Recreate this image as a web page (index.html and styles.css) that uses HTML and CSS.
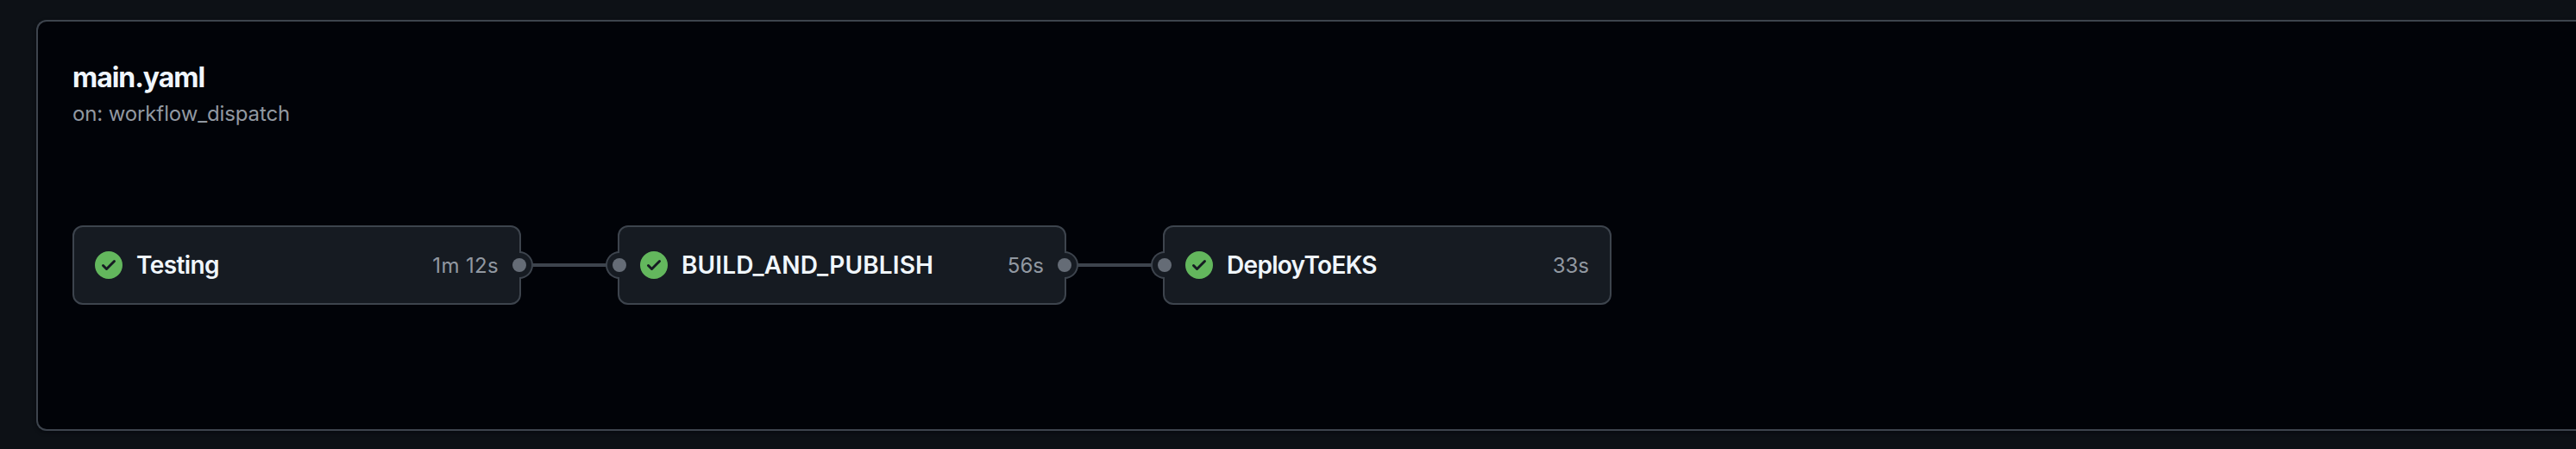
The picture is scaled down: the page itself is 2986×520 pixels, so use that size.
FILE: index.html
```html
<!DOCTYPE html>
<html lang="en">
<head>
<meta charset="utf-8">
<title>main.yaml</title>
<link rel="stylesheet" href="styles.css">
</head>
<body>
<main class="panel">
  <header class="panel-header">
    <h1 class="title">main.yaml</h1>
    <p class="trigger">on: workflow_dispatch</p>
  </header>
  <div class="graph">
    <div class="job">
      <svg class="status" viewBox="0 0 16 16"><path fill-rule="evenodd" d="M8 16A8 8 0 1 0 8 0a8 8 0 0 0 0 16Zm3.78-9.72a.751.751 0 0 0-.018-1.042.751.751 0 0 0-1.042-.018L6.75 9.19 5.28 7.72a.751.751 0 0 0-1.042.018.751.751 0 0 0-.018 1.042l2 2a.75.75 0 0 0 1.06 0Z"/></svg>
      <span class="name name-testing">Testing</span>
      <span class="time time-long">1m 12s</span>
      <span class="port port-out"></span>
    </div>
    <div class="connector"></div>
    <div class="job">
      <span class="port port-in"></span>
      <svg class="status" viewBox="0 0 16 16"><path fill-rule="evenodd" d="M8 16A8 8 0 1 0 8 0a8 8 0 0 0 0 16Zm3.78-9.72a.751.751 0 0 0-.018-1.042.751.751 0 0 0-1.042-.018L6.75 9.19 5.28 7.72a.751.751 0 0 0-1.042.018.751.751 0 0 0-.018 1.042l2 2a.75.75 0 0 0 1.06 0Z"/></svg>
      <span class="name name-build">BUILD_AND_PUBLISH</span>
      <span class="time">56s</span>
      <span class="port port-out"></span>
    </div>
    <div class="connector"></div>
    <div class="job">
      <span class="port port-in"></span>
      <svg class="status" viewBox="0 0 16 16"><path fill-rule="evenodd" d="M8 16A8 8 0 1 0 8 0a8 8 0 0 0 0 16Zm3.78-9.72a.751.751 0 0 0-.018-1.042.751.751 0 0 0-1.042-.018L6.75 9.19 5.28 7.72a.751.751 0 0 0-1.042.018.751.751 0 0 0-.018 1.042l2 2a.75.75 0 0 0 1.06 0Z"/></svg>
      <span class="name name-deploy">DeployToEKS</span>
      <span class="time">33s</span>
    </div>
  </div>
</main>
</body>
</html>
```
FILE: styles.css
```css
* { box-sizing: border-box; }

body {
  margin: 0;
  height: 520px;
  padding: 23px 0 21px 42px;
  overflow: hidden;
  background: #0d1116;
  color: #f0f6fc;
  font-family: Inter, "Liberation Sans", sans-serif;
}

.panel {
  height: 476px;
  padding: 45px 40px 0;
  background: #010308;
  border: 2px solid #3d444d;
  border-right: 0;
  border-radius: 12px 0 0 12px;
  box-shadow: 0 2px 4px rgba(1, 4, 9, 0.5);
}

.panel-header { height: 191px; }

.title {
  margin: 0;
  font-size: 32px;
  line-height: 40px;
  font-weight: 700;
  letter-spacing: -1.05px;
}

.trigger {
  margin: 2px 0 0;
  color: #9198a1;
  font-size: 24px;
  line-height: 40px;
  letter-spacing: -0.13px;
}

.graph {
  display: flex;
  align-items: center;
}

.job {
  position: relative;
  display: flex;
  align-items: center;
  width: 520px;
  height: 92px;
  padding: 0 24px;
  background: #161b22;
  border: 2px solid #3d444d;
  border-radius: 12px;
}

.status {
  width: 32px;
  height: 32px;
  margin-right: 16px;
  fill: #63b75d;
}

.name {
  flex: 1;
  font-size: 28px;
  line-height: 40px;
  font-weight: 600;
  white-space: nowrap;
}

.name-testing { letter-spacing: -0.6px; }
.name-build { letter-spacing: 0.15px; }
.name-deploy { letter-spacing: -0.7px; }

.time {
  padding-top: 2px;
  color: #9198a1;
  font-size: 24px;
  line-height: 40px;
}

.time-long { letter-spacing: 0.35px; }

.connector {
  width: 112px;
  height: 4px;
  background: #3d444d;
}

/* Half-disc tab on the card edge, with a dot centred on the border */
.port {
  position: absolute;
  z-index: 1;
  top: 28px;
  width: 16px;
  height: 32px;
  background: #161b22;
  border: 2px solid #3d444d;
}

.port-out {
  right: -16px;
  border-left: 0;
  border-radius: 0 16px 16px 0;
}

.port-in {
  left: -16px;
  border-right: 0;
  border-radius: 16px 0 0 16px;
}

.port::after {
  content: "";
  position: absolute;
  top: 6px;
  width: 16px;
  height: 16px;
  border-radius: 50%;
  background: #656c76;
}

.port-out::after { left: -8px; }
.port-in::after { right: -8px; }
```
